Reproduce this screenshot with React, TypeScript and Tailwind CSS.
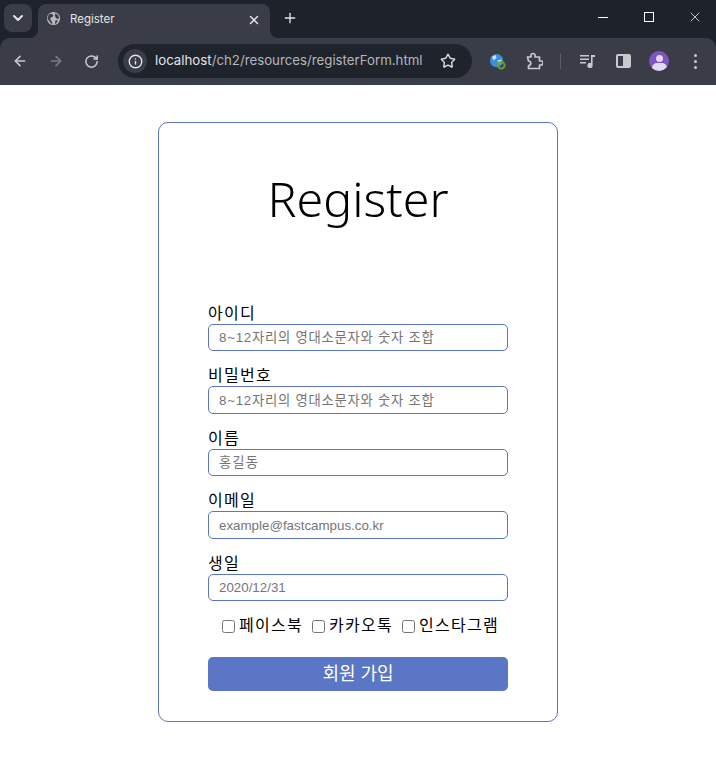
import { ArrowLeft, ArrowRight, ChevronDown, Info, Plus, RotateCw, Star, X } from 'lucide-react'

const UI_FONT = "font-['Inter','Noto_Sans','Noto_Sans_CJK_KR',sans-serif]"

const fields = [
  { label: '아이디', placeholder: '8~12자리의 영대소문자와 숫자 조합', track: 'tracking-[0.75px]' },
  { label: '비밀번호', placeholder: '8~12자리의 영대소문자와 숫자 조합', track: 'tracking-[0.75px]' },
  { label: '이름', placeholder: '홍길동', track: 'tracking-[1.07px]' },
  { label: '이메일', placeholder: 'example@fastcampus.co.kr', track: 'tracking-normal' },
  { label: '생일', placeholder: '2020/12/31', track: 'tracking-normal' },
]

const sns = ['페이스북', '카카오톡', '인스타그램']

function TabStrip() {
  return (
    <div className="flex h-[38px] bg-[#1e222a] text-[#e3e5e8]">
      <div className="ml-1 mt-1 flex h-7 w-7 items-center justify-center rounded-lg bg-[#3a3d47]">
        <ChevronDown className="h-4 w-4" strokeWidth={3} />
      </div>
      <div className="relative ml-[6px] mt-1 flex h-[34px] w-[232px] items-center rounded-t-lg bg-[#3a3d47] pb-[2px] pl-[9px] pr-[9px]">
        {/* flared tab feet */}
        <svg viewBox="0 0 8 8" className="absolute bottom-0 left-[-8px] h-2 w-2">
          <path d="M8 0v8H0a8 8 0 0 0 8-8z" fill="#3a3d47" />
        </svg>
        <svg viewBox="0 0 8 8" className="absolute bottom-0 right-[-8px] h-2 w-2">
          <path d="M0 0v8h8a8 8 0 0 1-8-8z" fill="#3a3d47" />
        </svg>
        <svg viewBox="0 0 16 16" className="-ml-px mb-[3px] h-[15px] w-[15px]">
          <circle cx="8" cy="8" r="7" fill="#b6b8bd" />
          <path d="M3 3.5 6 3l2 1.5-1 2-2 .5-.5 2L6 11l1 3-2-1-2-3-1.5-2zM10 2.5l3 2 1 3-1.5 1-2-1-1-2.5zM10 10l2.5-.5-1 3-2 1.5z" fill="#3a3d47" />
        </svg>
        <span className={`${UI_FONT} ml-[9px] flex-1 text-[11.5px]`}>Register</span>
        <X className="h-[14px] w-[14px]" strokeWidth={2.5} />
      </div>
      <div className="ml-[12px] mt-[10px] h-4 w-4">
        <Plus className="h-4 w-4" strokeWidth={2} />
      </div>
      <div className="-mr-[2px] ml-auto flex text-white">
        <div className="flex h-[34px] w-[46px] items-center justify-center">
          <div className="h-px w-[10px] bg-white" />
        </div>
        <div className="flex h-[34px] w-[46px] items-center justify-center">
          <div className="h-[10px] w-[10px] border border-white" />
        </div>
        <div className="flex h-[34px] w-[46px] items-center justify-center">
          <X className="h-4 w-4" strokeWidth={1.1} />
        </div>
      </div>
    </div>
  )
}

function Toolbar() {
  return (
    <div className="flex h-[47px] items-center bg-[#1e222a]">
      <div className="flex h-[47px] w-full items-center rounded-t-[10px] bg-[#3a3d47] pb-[1px] text-[#c7c9ce]">
        <ArrowLeft className="ml-[12px] h-4 w-4" strokeWidth={2.4} />
        <ArrowRight className="ml-[20px] h-4 w-4 text-[#7a7c83]" strokeWidth={2.4} />
        <RotateCw className="ml-[20px] h-[15px] w-[15px]" strokeWidth={2.4} />
        <div className="ml-[19px] flex h-[34px] w-[354px] items-center rounded-full bg-[#1f232b] pl-[5px]">
          <div className="flex h-6 w-6 items-center justify-center rounded-full bg-[#3a3d47] text-[#e3e5e8]">
            <Info className="h-[15px] w-[15px]" strokeWidth={2.2} />
          </div>
          <span className={`${UI_FONT} ml-[8px] flex-1 text-[13.25px] text-[#e3e5e8]`}>
            localhost<span className="text-[#b4b7bc]">/ch2/resources/registerForm.html</span>
          </span>
          <Star className="mr-[16px] h-4 w-4 text-[#d5d7da]" strokeWidth={2.2} />
        </div>
        {/* extension globe */}
        <svg viewBox="0 0 18 18" className="ml-[17px] h-[17px] w-[17px]">
          <circle cx="8" cy="8" r="7" fill="#3f8fd8" />
          <path d="M3 4l4-2 1 3-3 3zM9 8l4-1 1 3-4 2z" fill="#bfe3f7" />
          <circle cx="13" cy="13" r="3.5" fill="none" stroke="#6aa32a" strokeWidth="2" />
        </svg>
        {/* puzzle */}
        <svg viewBox="0 0 18 18" className="ml-[19px] h-[18px] w-[18px]" fill="none" stroke="currentColor" strokeWidth="1.7" strokeLinejoin="round">
          <path d="M2.5 5H6V3.5a2 2 0 0 1 4 0V5h4.5v4H16a2 2 0 0 1 0 4h-1.5v3.5h-11V13.5a2 2 0 0 0 0-4.5z" />
        </svg>
        <div className="ml-[17px] h-4 w-px bg-[#5a5d66]" />
        {/* media queue */}
        <svg viewBox="0 0 18 18" className="ml-[18px] h-[18px] w-[18px]" fill="currentColor">
          <path d="M1 3h9v1.5H1zM1 6.5h9V8H1zM1 10h6v1.5H1z" />
          <path d="M12 3h4v2h-2.4v8.5a2.6 2.6 0 1 1-1.6-2.4z" />
        </svg>
        {/* side panel */}
        <div className="ml-[19px] flex h-[14px] w-[15px] overflow-hidden rounded-[2px] border-2 border-[#c7c9ce]">
          <div className="flex-1" />
          <div className="w-[6px] bg-[#c7c9ce]" />
        </div>
        {/* profile */}
        <div className="ml-[18px] h-5 w-5 overflow-hidden rounded-full bg-[#7c55c0]">
          <div className="mx-auto mt-1 h-[7px] w-[7px] rounded-full bg-[#e3d9f3]" />
          <div className="mx-auto mt-[1px] h-[10px] w-[15px] rounded-full bg-[#e3d9f3]" />
        </div>
        <div className="ml-[25px] flex flex-col gap-[3px]">
          <div className="h-[3px] w-[3px] rounded-full bg-[#c7c9ce]" />
          <div className="h-[3px] w-[3px] rounded-full bg-[#c7c9ce]" />
          <div className="h-[3px] w-[3px] rounded-full bg-[#c7c9ce]" />
        </div>
      </div>
    </div>
  )
}

export default function App() {
  return (
    <div className="h-[757px] w-[716px] overflow-hidden bg-white font-['Liberation_Sans','Noto_Sans_CJK_KR',sans-serif]">
      <TabStrip />
      <Toolbar />

      <main className="pt-[37px]">
        <form className="mx-auto flex h-[600px] w-[400px] flex-col rounded-[10px] border border-[#5a76c4] px-[49px]">
          <h1 className="mt-[41px] mb-[72.9px] text-center font-['Noto_Sans',sans-serif] text-[48.4px] font-light leading-[68px] text-black">
            Register
          </h1>

          <div className="flex flex-col gap-[16px]">
            {fields.map((field) => (
              <label key={field.label} className="flex flex-col text-base leading-[18px] text-black">
                <span className="h-[19px] tracking-[1.28px]">{field.label}</span>
                <input
                  type="text"
                  placeholder={field.placeholder}
                  className={`h-[27.5px] rounded-[5px] border border-[#5a76c4] px-[10px] text-[13.33px] outline-none placeholder:text-[#757575] ${field.track}`}
                />
              </label>
            ))}
          </div>

          <div className="mt-[13px] flex justify-center gap-[9px] pl-[5px] text-base leading-[24px] tracking-[1.28px] text-black">
            {sns.map((name) => (
              <label key={name} className="flex items-center">
                <input type="checkbox" className="mr-[4px] h-[13px] w-[13px] appearance-auto" />
                {name}
              </label>
            ))}
          </div>

          <button
            type="button"
            className="mt-[19px] h-[34px] rounded-[5px] bg-[#5a76c4] text-lg text-white"
          >
            회원 가입
          </button>
        </form>
      </main>
    </div>
  )
}
